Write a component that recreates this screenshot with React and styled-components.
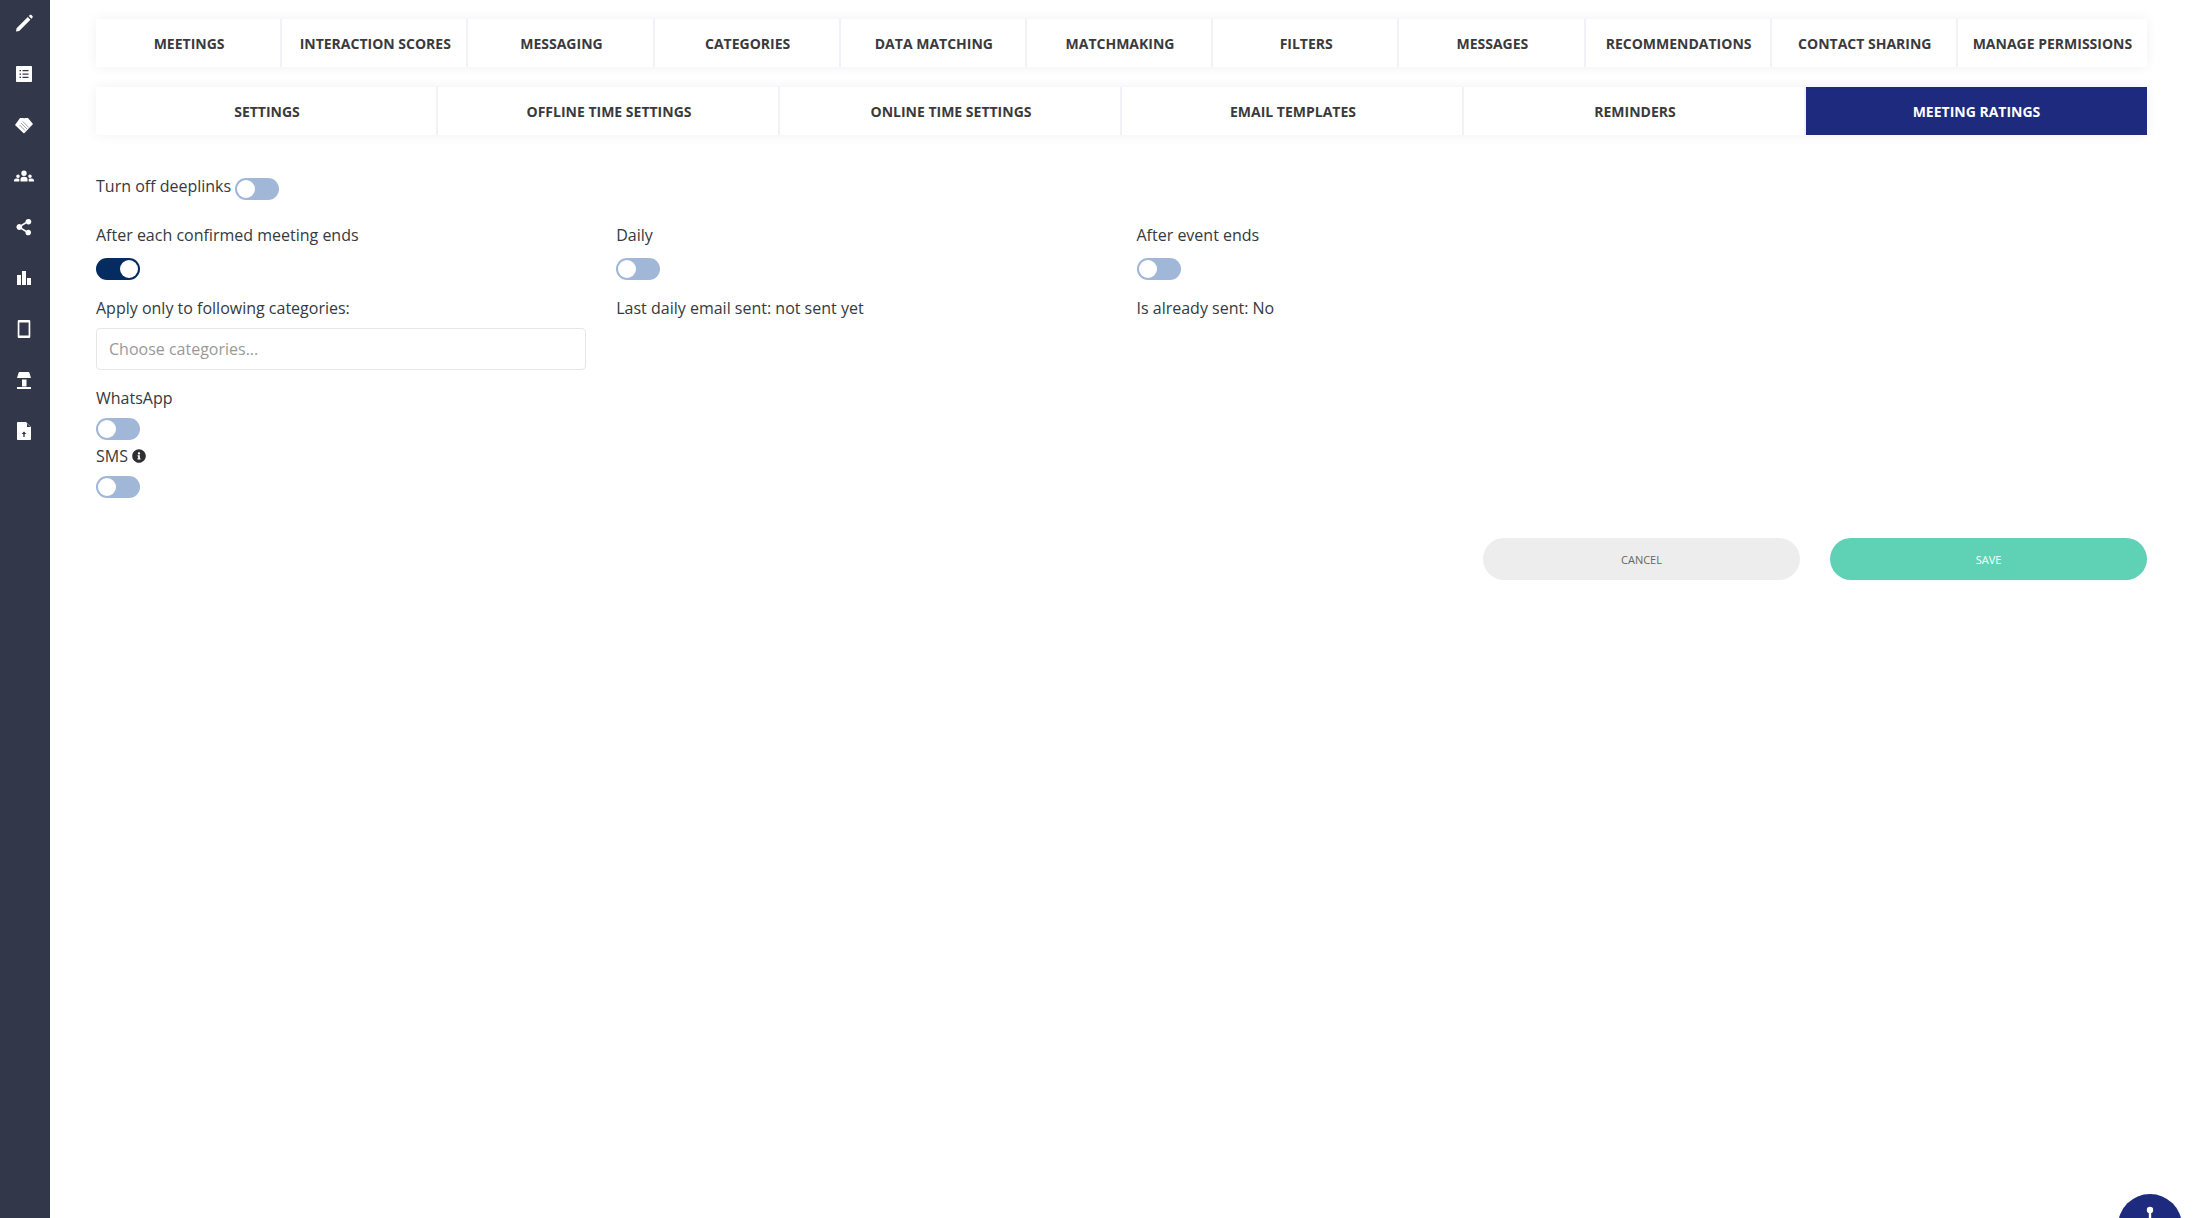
import React from "react";
import styled, { createGlobalStyle } from "styled-components";
import { FaInfoCircle } from "react-icons/fa";

const topTabs = [
  "Meetings",
  "Interaction scores",
  "Messaging",
  "Categories",
  "Data matching",
  "Matchmaking",
  "Filters",
  "Messages",
  "Recommendations",
  "Contact sharing",
  "Manage permissions",
];

const subTabs = [
  "Settings",
  "Offline time settings",
  "Online time settings",
  "Email templates",
  "Reminders",
  "Meeting ratings",
];

const navIcons = [
  <path key="pen" d="M1 17.500l.6-3.200L12.800 3.100l2.600 2.600L4.200 16.900z M13.800 2.100l1-1c.5-.5 1.100-.5 1.600 0l1 1c.5.500.5 1.100 0 1.600l-1 1z" />,
  <path key="list" fillRule="evenodd" d="M2 1h14c.6 0 1 .4 1 1v14c0 .6-.4 1-1 1H2c-.6 0-1-.4-1-1V2c0-.6.4-1 1-1z M4.500 5h1.500v1.300H4.500z M7.500 5h6v1.300h-6z M4.500 8.400h1.500v1.300H4.500z M7.500 8.400h6v1.300h-6z M4.500 11.800h1.500v1.300H4.500z M7.500 11.800h6v1.300h-6z" />,
  <g key="deal">
    <path d="M5 2h3.500l.7.4.600-.4H13l5 6-8.500 9q-.6.500-1.200 0L0 9z" />
    <path d="M6 7l6 6M7.800 5.500l6 6M4.500 9l5.500 5.500" stroke="#8d91a0" strokeWidth="0.900" fill="none" />
  </g>,
  <path key="users" transform="translate(0 2.500)" d="M9 1a2.700 2.700 0 110 5.400A2.700 2.700 0 019 1z M5.500 12V9.500C5.500 8 7 7.200 9 7.200s3.500.8 3.500 2.300V12z M3 5a1.800 1.800 0 110 3.600A1.800 1.800 0 013 5z M15 5a1.800 1.800 0 110 3.600A1.800 1.800 0 0115 5z M-1 12v-1.300c0-1.200 1.400-1.700 3-1.700.6 0 1.200.1 2.300.4V12z M19 12v-1.300c0-1.200-1.400-1.700-3-1.700-.6 0-1.200.1-2.300.4V12z" />,
  <path key="share" transform="translate(-0.500 0)" d="M14 1a2.800 2.800 0 11-2.200 4.500L7.500 8a2.900 2.900 0 010 2l4.300 2.500a2.800 2.800 0 11-.8 1.400L6.600 11.300a2.900 2.900 0 110-4.600L11 4.100A2.800 2.800 0 0114 1z" />,
  <path key="bars" d="M2 6h4v10H2z M7 2h4v14H7z M12 9h4v7h-4z" />,
  <path key="tablet" fillRule="evenodd" d="M4 0h10c.8 0 1.300.5 1.300 1.300v15.400c0 .8-.5 1.300-1.300 1.300H4c-.8 0-1.300-.5-1.300-1.300V1.300C2.700.5 3.200 0 4 0z M4.400 2.400v13.200h9.200V2.400z" />,
  <path key="lamp" d="M5 1h8c.8 0 1.200.3 1.500 1L16 7H2l1.500-5C3.800 1.300 4.200 1 5 1z M7 8.500h4.500V15.500H7z M2 16h14v2H2z" />,
  <path key="file" fillRule="evenodd" d="M3 0h8l5 5v12c0 .6-.4 1-1 1H3c-.6 0-1-.4-1-1V1c0-.6.4-1 1-1z M12 1.500V5h3.500z M9 9.500L6.600 12h1.700v3h1.400v-3h1.700z" />,
];

const GlobalStyle = createGlobalStyle`
  html, body {
    margin: 0;
    padding: 0;
    background: #ffffff;
  }
  body {
    font-family: "Open Sans", "Liberation Sans", sans-serif;
    font-size: 16px;
    color: #343a40;
    overflow: hidden;
  }
  * {
    box-sizing: border-box;
  }
`;

const Page = styled.div`
  display: flex;
  height: 1218px;
  overflow: hidden;
  position: relative;
`;

const Sidebar = styled.nav`
  width: 50px;
  flex-shrink: 0;
  background-color: #33374a;
  display: flex;
  flex-direction: column;
  align-items: center;
  gap: 33px;
  padding: 14px 2px 0 0;
`;

const NavIcon = styled.svg`
  width: 18px;
  height: 18px;
  fill: #ffffff;
  overflow: visible;
  display: block;
`;

const Main = styled.main`
  flex: 1;
  min-width: 0;
  padding: 19px 50px 0 46px;
`;

const TabRow = styled.div`
  display: grid;
  grid-template-columns: repeat(${(props) => props.$count - 1}, ${(props) => props.$tabWidth}px) 1fr;
  height: 48px;
  margin-bottom: 20px;
  box-shadow: 0 0 12px rgba(20, 30, 80, 0.06);
`;

const Tab = styled.div`
  display: flex;
  align-items: center;
  justify-content: center;
  font-size: 14px;
  font-weight: 700;
  text-transform: uppercase;
  white-space: nowrap;
  color: ${(props) => (props.$active ? "#ffffff" : "#3a3a3d")};
  background-color: ${(props) => (props.$active ? "#1e2a7e" : "#ffffff")};
  box-shadow: inset -2px 0 0 #f0f2f8;

  &:last-child {
    box-shadow: none;
  }
`;

const Deeplinks = styled.div`
  display: flex;
  align-items: center;
  gap: 4px;
  margin-top: 43px;
  height: 22px;
`;

const DeeplinksLabel = styled.div`
  line-height: 24px;
  margin-top: -6px;
`;

const Label = styled.div`
  line-height: 24px;
`;

const Toggle = styled.span`
  display: block;
  flex-shrink: 0;
  position: relative;
  width: 44px;
  height: 22px;
  border-radius: 11px;
  background-color: ${(props) => (props.$on ? "#042c60" : "#a0b7d8")};

  &::after {
    content: "";
    position: absolute;
    top: 2px;
    left: ${(props) => (props.$on ? "24px" : "2px")};
    width: 18px;
    height: 18px;
    border-radius: 50%;
    background-color: #ffffff;
  }
`;

const Columns = styled.div`
  display: grid;
  grid-template-columns: repeat(4, 1fr);
  column-gap: 30px;
  margin-top: 23px;
`;

const Column = styled.div`
  display: flex;
  flex-direction: column;
  align-items: flex-start;
`;

const MainToggle = styled.div`
  margin-top: 11px;
  margin-bottom: 16px;
`;

const SmallToggle = styled.div`
  margin-top: 8px;
  margin-bottom: 4px;
`;

const Categories = styled.div`
  width: 100%;
  height: 42px;
  margin-top: 8px;
  margin-bottom: 16px;
  padding: 0 12px;
  display: flex;
  align-items: center;
  border: 1px solid #e6e6e6;
  border-radius: 4px;
  color: #999999;
  background: #ffffff;
`;

const SmsLabel = styled(Label)`
  display: flex;
  align-items: center;
  gap: 4px;

  svg {
    width: 14px;
    height: 14px;
    color: #2f2f33;
  }
`;

const Actions = styled.div`
  display: flex;
  justify-content: flex-end;
  gap: 30px;
  margin-top: 36px;
`;

const Button = styled.button`
  width: 317px;
  height: 42px;
  border: none;
  border-radius: 21px;
  font-family: inherit;
  font-size: 11px;
  text-transform: uppercase;
  color: ${(props) => (props.$primary ? "#ffffff" : "#666666")};
  background-color: ${(props) => (props.$primary ? "#5fd1b5" : "#ededed")};
`;

const HelpBubble = styled.div`
  position: absolute;
  right: 15px;
  bottom: -40px;
  width: 64px;
  height: 64px;
  border-radius: 50%;
  background-color: #1e2a7e;
  display: flex;
  justify-content: center;
  padding-top: 12px;

  svg {
    width: 8px;
    height: 16px;
    fill: #ffffff;
  }
`;

const App = () => {
  return (
    <Page>
      <GlobalStyle />
      <Sidebar>
        {navIcons.map((icon) => (
          <NavIcon key={icon.key} viewBox="0 0 18 18">
            {icon}
          </NavIcon>
        ))}
      </Sidebar>
      <Main>
        <TabRow $count={topTabs.length} $tabWidth={186.2}>
          {topTabs.map((tab) => (
            <Tab key={tab}>{tab}</Tab>
          ))}
        </TabRow>
        <TabRow $count={subTabs.length} $tabWidth={342}>
          {subTabs.map((tab) => (
            <Tab key={tab} $active={tab === "Meeting ratings"}>
              {tab}
            </Tab>
          ))}
        </TabRow>
        <Deeplinks>
          <DeeplinksLabel>Turn off deeplinks</DeeplinksLabel>
          <Toggle />
        </Deeplinks>
        <Columns>
          <Column>
            <Label>After each confirmed meeting ends</Label>
            <MainToggle>
              <Toggle $on />
            </MainToggle>
            <Label>Apply only to following categories:</Label>
            <Categories>Choose categories...</Categories>
            <Label>WhatsApp</Label>
            <SmallToggle>
              <Toggle />
            </SmallToggle>
            <SmsLabel>
              SMS <FaInfoCircle />
            </SmsLabel>
            <SmallToggle>
              <Toggle />
            </SmallToggle>
          </Column>
          <Column>
            <Label>Daily</Label>
            <MainToggle>
              <Toggle />
            </MainToggle>
            <Label>Last daily email sent: not sent yet</Label>
          </Column>
          <Column>
            <Label>After event ends</Label>
            <MainToggle>
              <Toggle />
            </MainToggle>
            <Label>Is already sent: No</Label>
          </Column>
        </Columns>
        <Actions>
          <Button>Cancel</Button>
          <Button $primary>Save</Button>
        </Actions>
      </Main>
      <HelpBubble>
        <svg viewBox="0 0 8 16">
          <circle cx="4" cy="4" r="3.2" />
          <rect x="2.800" y="6" width="2.400" height="10" />
        </svg>
      </HelpBubble>
    </Page>
  );
};

export default App;
